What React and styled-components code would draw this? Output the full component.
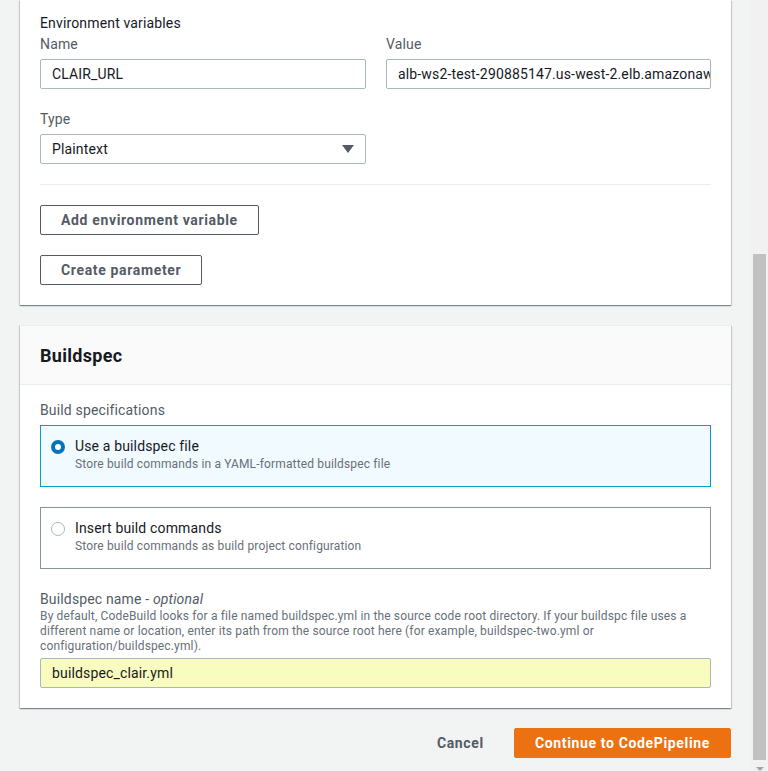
import React from "react";
import styled, { createGlobalStyle } from "styled-components";

const Global = createGlobalStyle`
  html, body { margin: 0; padding: 0; }
  body {
    font-family: Roboto, "Noto Sans", "Liberation Sans", sans-serif;
    background: #f2f3f3;
    color: #16191f;
    letter-spacing: 0.15px;
  }
  * { box-sizing: border-box; }
`;

const Shell = styled.div`
  display: flex;
  height: 771px;
  width: 768px;
  overflow: hidden;
  background: #f2f3f3;
`;

const Main = styled.div`
  flex: 1;
  display: flex;
  flex-direction: column;
  gap: 20px;
  padding: 0 20px 0 20px;
`;

const Card = styled.section`
  background: #fff;
  border-top: ${(p) => (p.$cut ? "none" : "1px solid #eaeded")};
  box-shadow: 0 1px 1px 0 rgba(0, 28, 36, 0.3), 1px 1px 1px 0 rgba(0, 28, 36, 0.15),
    -1px 1px 1px 0 rgba(0, 28, 36, 0.15);
`;

const CardHeader = styled.header`
  height: 59px;
  display: flex;
  align-items: center;
  padding: 0 20px;
  background: #fafafa;
  border-bottom: 1px solid #eaeded;
  font-size: 18px;
  font-weight: 700;
  letter-spacing: 0.3px;
  color: #16191f;
`;

const CardBody = styled.div`
  padding: ${(p) => p.$pad || "15px 20px 20px 20px"};
  display: flex;
  flex-direction: column;
`;

const SectionTitle = styled.div`
  font-size: 14px;
  line-height: 22px;
  color: #16191f;
`;

const Label = styled.div`
  font-size: 14px;
  line-height: 20px;
  color: #545b64;
  margin-top: ${(p) => p.$mt || 0}px;

  em {
    font-style: italic;
  }
`;

const Hint = styled.div`
  font-size: 12px;
  line-height: 15px;
  color: #687078;
`;

const Grid2 = styled.div`
  display: grid;
  grid-template-columns: 326px 325px;
  column-gap: 20px;
`;

const Field = styled.div`
  display: flex;
  flex-direction: column;
  margin-top: ${(p) => p.$mt || 0}px;
`;

const Input = styled.div`
  margin-top: ${(p) => (p.$mt ?? 5)}px;
  height: 30px;
  border: 1px solid #aab7b8;
  border-radius: 2px;
  background: ${(p) => (p.$autofill ? "#f9fcbf" : "#fff")};
  padding: 0 11px 0 11px;
  display: flex;
  align-items: center;
  font-size: 14px;
  color: #16191f;
  white-space: nowrap;
  overflow: hidden;
`;

const Select = styled(Input)`
  justify-content: space-between;
  padding-right: 11px;
`;

const Caret = styled.span`
  width: 0;
  height: 0;
  border-left: 6px solid transparent;
  border-right: 6px solid transparent;
  border-top: 8px solid #545b64;
`;

const Divider = styled.hr`
  border: none;
  border-top: 1px solid #eaeded;
  margin: 20px 0 0 0;
  height: 0;
`;

const Button = styled.button`
  align-self: flex-start;
  margin-top: 20px;
  height: 30px;
  padding: 0 20px;
  border: 1px solid #545b64;
  border-radius: 2px;
  background: #fff;
  color: #545b64;
  font-family: inherit;
  font-size: 14px;
  font-weight: 700;
  letter-spacing: 0.65px;
`;

const Tile = styled.div`
  margin-top: ${(p) => p.$mt}px;
  height: 62px;
  border: 1px solid ${(p) => (p.$selected ? "#00a1c9" : "#879596")};
  background: ${(p) => (p.$selected ? "#f1faff" : "#fff")};
  padding: 10px 11px 0 10px;
  display: flex;
  gap: 10px;
`;

const Radio = styled.span`
  width: 14px;
  height: 14px;
  margin-top: 4px;
  flex: none;
  border-radius: 50%;
  background: #fff;
  border: ${(p) => (p.$on ? "4px solid #0073bb" : "1px solid #aab7b8")};
`;

const TileText = styled.div`
  display: flex;
  flex-direction: column;
`;

const TileTitle = styled.div`
  font-size: 14px;
  line-height: 20px;
  color: #16191f;
`;

const TileDesc = styled.div`
  font-size: 12px;
  line-height: 16px;
  color: #687078;
`;

const Footer = styled.div`
  display: flex;
  justify-content: flex-end;
  align-items: center;
  gap: 10px;
`;

const LinkButton = styled.button`
  height: 30px;
  padding: 0 20px;
  border: none;
  background: transparent;
  color: #545b64;
  font-family: inherit;
  font-size: 14px;
  font-weight: 700;
  letter-spacing: 0.65px;
`;

const PrimaryButton = styled.button`
  height: 30px;
  padding: 0 20px;
  border: 1px solid #ec7211;
  border-radius: 2px;
  background: #ec7211;
  color: #fff;
  font-family: inherit;
  font-size: 14px;
  font-weight: 700;
  letter-spacing: 0.65px;
`;

const Scrollbar = styled.div`
  width: 17px;
  flex: none;
  background: #f1f1f1;
  display: flex;
  flex-direction: column;
  align-items: center;
  padding-top: 254px;
`;

const Thumb = styled.div`
  width: 13px;
  height: 506px;
  background: #c1c1c1;
`;

const ArrowDown = styled.div`
  margin-top: 7px;
  width: 0;
  height: 0;
  border-left: 4px solid transparent;
  border-right: 4px solid transparent;
  border-top: 4px solid #a3a3a3;
`;

export default function App() {
  return (
    <>
      <Global />
      <Shell>
        <Main>
          <Card $cut>
            <CardBody $pad="12px 20px 20px 20px">
              <SectionTitle>Environment variables</SectionTitle>
              <Grid2>
                <Field>
                  <Label>Name</Label>
                  <Input>CLAIR_URL</Input>
                </Field>
                <Field>
                  <Label>Value</Label>
                  <Input>alb-ws2-test-290885147.us-west-2.elb.amazonaws.com</Input>
                </Field>
                <Field $mt={20}>
                  <Label>Type</Label>
                  <Select>
                    <span>Plaintext</span>
                    <Caret />
                  </Select>
                </Field>
              </Grid2>
              <Divider />
              <Button>Add environment variable</Button>
              <Button>Create parameter</Button>
            </CardBody>
          </Card>

          <Card>
            <CardHeader>Buildspec</CardHeader>
            <CardBody>
              <Label>Build specifications</Label>
              <Tile $selected $mt={5}>
                <Radio $on />
                <TileText>
                  <TileTitle>Use a buildspec file</TileTitle>
                  <TileDesc>Store build commands in a YAML-formatted buildspec file</TileDesc>
                </TileText>
              </Tile>
              <Tile $mt={20}>
                <Radio />
                <TileText>
                  <TileTitle>Insert build commands</TileTitle>
                  <TileDesc>Store build commands as build project configuration</TileDesc>
                </TileText>
              </Tile>
              <Label $mt={20}>
                Buildspec name - <em>optional</em>
              </Label>
              <Hint>
                By default, CodeBuild looks for a file named buildspec.yml in the source code root
                directory. If your buildspc file uses a different name or location, enter its path
                from the source root here (for example, buildspec-two.yml or
                configuration/buildspec.yml).
              </Hint>
              <Input $autofill $mt={4}>buildspec_clair.yml</Input>
            </CardBody>
          </Card>

          <Footer>
            <LinkButton>Cancel</LinkButton>
            <PrimaryButton>Continue to CodePipeline</PrimaryButton>
          </Footer>
        </Main>
        <Scrollbar>
          <Thumb />
          <ArrowDown />
        </Scrollbar>
      </Shell>
    </>
  );
}
